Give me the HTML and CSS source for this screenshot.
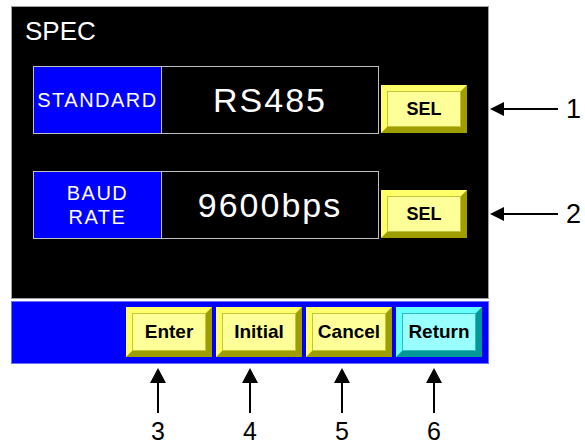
FILE: index.html
```html
<!DOCTYPE html>
<html lang="en">
<head>
  <meta charset="UTF-8" />
  <title>SPEC</title>
  <link rel="stylesheet" href="styles.css">
</head>
<body>
  <div class="figure">
    <div class="screen">
      <div class="screen-title">SPEC</div>

      <div class="setting">
        <div class="field">
          <div class="field-label">STANDARD</div>
          <div class="field-value">RS485</div>
        </div>
        <div class="key key-sel">SEL</div>
        <div class="callout-side">
          <svg width="68" height="16" viewBox="0 0 68 16"><polygon points="0,8 14,1 14,15" fill="#000"/><line x1="13" y1="8" x2="68" y2="8" stroke="#000" stroke-width="2"/></svg>
          <span>1</span>
        </div>
      </div>

      <div class="setting setting-second">
        <div class="field">
          <div class="field-label">BAUD<br>RATE</div>
          <div class="field-value">9600bps</div>
        </div>
        <div class="key key-sel">SEL</div>
        <div class="callout-side">
          <svg width="68" height="16" viewBox="0 0 68 16"><polygon points="0,8 14,1 14,15" fill="#000"/><line x1="13" y1="8" x2="68" y2="8" stroke="#000" stroke-width="2"/></svg>
          <span>2</span>
        </div>
      </div>
    </div>

    <div class="keybar">
      <div class="key">Enter</div>
      <div class="key">Initial</div>
      <div class="key">Cancel</div>
      <div class="key key-return">Return</div>
    </div>

    <div class="callouts-bottom">
      <div class="callout-up">
        <svg width="16" height="45" viewBox="0 0 16 45"><polygon points="8,0 0,15 16,15" fill="#000"/><line x1="8" y1="14" x2="8" y2="45" stroke="#000" stroke-width="2"/></svg>
        <span>3</span>
      </div>
      <div class="callout-up">
        <svg width="16" height="45" viewBox="0 0 16 45"><polygon points="8,0 0,15 16,15" fill="#000"/><line x1="8" y1="14" x2="8" y2="45" stroke="#000" stroke-width="2"/></svg>
        <span>4</span>
      </div>
      <div class="callout-up">
        <svg width="16" height="45" viewBox="0 0 16 45"><polygon points="8,0 0,15 16,15" fill="#000"/><line x1="8" y1="14" x2="8" y2="45" stroke="#000" stroke-width="2"/></svg>
        <span>5</span>
      </div>
      <div class="callout-up">
        <svg width="16" height="45" viewBox="0 0 16 45"><polygon points="8,0 0,15 16,15" fill="#000"/><line x1="8" y1="14" x2="8" y2="45" stroke="#000" stroke-width="2"/></svg>
        <span>6</span>
      </div>
    </div>
  </div>
</body>
</html>
```

FILE: styles.css
```css
body {
  margin: 0;
  background: #fff;
  font-family: "Liberation Sans", Arial, sans-serif;
  color: #000;
}
.figure {
  padding: 6px 0 0 11px;
}
.screen {
  box-sizing: border-box;
  width: 478px;
  height: 293px;
  padding: 11px 0 0 21px;
  background: #000;
  border: 1px solid #a0a0a0;
}
.screen-title {
  margin: 0 0 22px -8px;
  height: 26px;
  font-size: 26px;
  line-height: 26px;
  color: #fff;
}
.setting {
  display: flex;
  align-items: flex-end;
}
.setting > * {
  flex: none;
}
.setting-second {
  margin-top: 37px;
}
.field {
  box-sizing: border-box;
  display: flex;
  width: 346px;
  height: 68px;
  border: 1px solid #c0c0c0;
}
.field-label {
  width: 127px;
  display: flex;
  align-items: center;
  justify-content: center;
  text-align: center;
  background: #0000ff;
  border-right: 1px solid #c0c0c0;
  color: #fff;
  font-size: 20px;
  line-height: 24px;
  letter-spacing: 1.5px;
}
.field-value {
  flex: 1;
  display: flex;
  align-items: center;
  justify-content: center;
  color: #fff;
  font-size: 34px;
  line-height: 34px;
  letter-spacing: 2px;
}
.key {
  box-sizing: border-box;
  width: 86px;
  height: 50px;
  display: flex;
  align-items: center;
  justify-content: center;
  background: #ffff99;
  border: 6px solid;
  border-color: #ffff6a #9e9e00 #9e9e00 #ffff6a;
  box-shadow: inset 0 0 0 1px #c4c43a;
  font-weight: bold;
  font-size: 19px;
}
.key-sel {
  height: 48px;
  margin: 0 0 1px 2px;
  font-size: 18px;
}
.key-return {
  background: #99ffff;
  border-color: #66ffff #009999 #009999 #66ffff;
  box-shadow: inset 0 0 0 1px #33bbbb;
}
.callout-side {
  display: flex;
  align-items: center;
  height: 48px;
  margin: 0 0 1px 23px;
}
.callout-side svg {
  display: block;
}
.callout-side span {
  margin-left: 8px;
  font-size: 27px;
  line-height: 27px;
}
.keybar {
  box-sizing: border-box;
  width: 478px;
  height: 63px;
  margin-top: 2px;
  padding: 5px 6px 0 0;
  display: flex;
  justify-content: flex-end;
  gap: 4px;
  background: #0000ff;
  border: 1px solid #7070ff;
}
.callouts-bottom {
  display: flex;
  gap: 62px;
  margin-top: 4px;
  padding-left: 132px;
}
.callout-up {
  width: 30px;
  display: flex;
  flex-direction: column;
  align-items: center;
}
.callout-up svg {
  display: block;
}
.callout-up span {
  margin-top: 7px;
  font-size: 25px;
  line-height: 22px;
}
```
